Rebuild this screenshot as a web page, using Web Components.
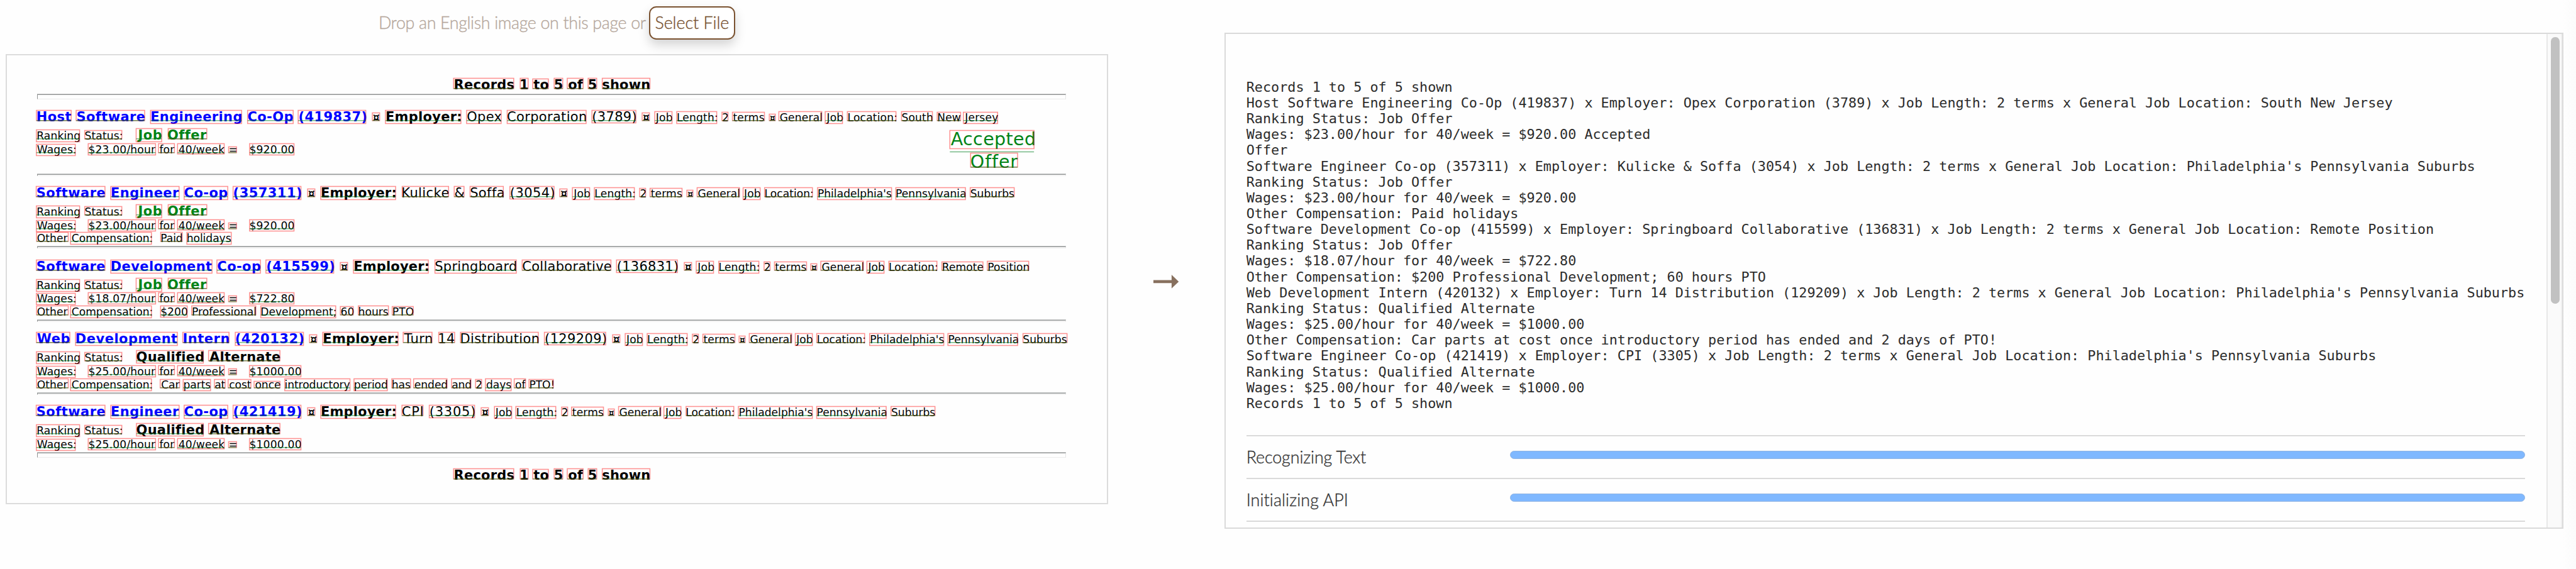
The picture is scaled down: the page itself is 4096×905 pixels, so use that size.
<!DOCTYPE html>
<html lang="en">
<head>
<meta charset="utf-8">
<title>OCR demo</title>
<style>
html,body{margin:0;padding:0;width:100%;height:100%;overflow:hidden;background:#fefefe}
</style>
</head>
<body>
<ocr-app></ocr-app>
<script>
const S = 4096 / 4886;
const u = n => (n * S).toFixed(3) + 'px';
const SANS = '"DejaVu Sans", Verdana, sans-serif';
const MONO = '"DejaVu Sans Mono", Menlo, monospace';
const LATO = 'Lato, sans-serif';
const ctx = document.createElement('canvas').getContext('2d');
const measure = (text, font) => { ctx.font = font; return ctx.measureText(text); };

/* One recognised word: its text, a bounding box and a baseline mark. */
class OcrWord extends HTMLElement {
  connectedCallback() {
    if (this.shadowRoot) return;
    const root = this.attachShadow({ mode: 'open' });
    const text = this.textContent, font = this.font, ls = this.spacing || 0;
    const m = measure(text, font);
    const adv = m.width + ls * text.length;
    const left = -m.actualBoundingBoxLeft - 1.2 * S - adv;
    const right = m.actualBoundingBoxRight + ls * (text.length - 1) - 0.5 * S - adv;
    const top = -m.actualBoundingBoxAscent - 1.8 * S;
    const bottom = Math.max(m.actualBoundingBoxDescent, 0) - (m.actualBoundingBoxDescent > 2 ? 0.6 : 1.4) * S;
    const line = (this.baseShift || 0) * S - 1.5 * S;
    root.innerHTML = `<style>
      :host{display:inline-block;white-space:pre}
      svg{width:1px;height:1px;margin-right:-1px;overflow:visible;vertical-align:baseline}
    </style><slot></slot><svg aria-hidden="true"><g transform="translate(0 1)"><rect x="${left}" y="${top}" width="${right - left}" height="${bottom - top}" fill="none" stroke="#ff0000" stroke-opacity=".43" stroke-width="${1.8 * S}"/><line x1="${left}" x2="${right}" y1="${line}" y2="${line}" stroke="#008020" stroke-opacity=".55" stroke-width="${1.6 * S}"/></g></svg>`;
  }
}
customElements.define('ocr-word', OcrWord);

/* A run of words in one style, stretched between two x positions. */
class OcrRun extends HTMLElement {
  connectedCallback() {
    if (this.shadowRoot) return;
    const { text, x0, x1, size, bold, color, prev, baseShift } = this.spec;
    const root = this.attachShadow({ mode: 'open' });
    const px = size * S, font = `${bold ? 700 : 400} ${px}px ${SANS}`;
    const words = text.split(' ');
    const ws = bold ? 0 : 0.034 * px;
    const first = measure(words[0], font), last = measure(words[words.length - 1], font);
    const natural = words.reduce((s, w) => s + measure(w, font).width, 0) + (words.length - 1) * (measure(' ', font).width + ws);
    const bl = -first.actualBoundingBoxLeft, br = last.width - last.actualBoundingBoxRight;
    const single = text.length === 1;
    const target = single ? natural : (x1 - x0 - 0.4) * S + bl + br;
    const ls = single ? 0 : (target - natural) / (text.length - 1);
    const start = single ? ((x0 + x1) / 2 + .3) * S - natural / 2 : (x0 + 0.6) * S - bl;
    this.endX = start + target + ls;
    root.innerHTML = `<style>
      :host{display:block;flex:none;white-space:pre;line-height:0;margin-left:${(start - prev).toFixed(3)}px;width:${(target + ls).toFixed(3)}px;
      font:${bold ? 700 : 400} ${px}px/0 ${SANS};letter-spacing:${ls.toFixed(4)}px;word-spacing:${ws.toFixed(3)}px;color:${color || '#000'}}
    </style>`;
    words.forEach((w, i) => {
      if (i) root.append(' ');
      const el = document.createElement('ocr-word');
      el.textContent = w; el.font = font; el.spacing = ls; el.baseShift = baseShift;
      root.append(el);
    });
  }
}
customElements.define('ocr-run', OcrRun);

/* A text line whose bottom edge is the baseline. */
class OcrLine extends HTMLElement {
  connectedCallback() {
    if (this.shadowRoot) return;
    const { h, runs, origin } = this.spec;
    const root = this.attachShadow({ mode: 'open' });
    root.innerHTML = `<style>:host{display:flex;align-items:baseline;height:${u(h)}}.strut{width:0;height:${u(h)};flex:none}</style><div class="strut"></div>`;
    let prev = origin * S;
    for (const r of runs) {
      const el = document.createElement('ocr-run');
      el.spec = { ...r, prev };
      root.append(el);
      if (el.endX === undefined) el.connectedCallback();
      prev = el.endX;
    }
  }
}
customElements.define('ocr-line', OcrLine);

class OcrRule extends HTMLElement {
  connectedCallback() {
    if (this.shadowRoot) return;
    const tall = this.hasAttribute('tall');
    this.attachShadow({ mode: 'open' }).innerHTML = `<style>
      :host{display:block;box-sizing:border-box;margin-top:var(--gap);height:${u(tall ? 9.3 : 3.6)};width:${u(1952)};
      border-style:solid;border-width:1px;border-color:#8f9292 #e6e6e6 #ececec #8f9292;box-shadow:0 -1px 0 #c4c6c6}
    </style>`;
  }
}
customElements.define('ocr-rule', OcrRule);

const run = (text, x0, x1, size = 25, bold = false, color, baseShift) => ({ text, x0, x1, size, bold, color, baseShift });
const BLUE = '#0000ff', GREEN = '#008316';
const head = (title, tx, e0, e1, company, c0, c1, a, j0, j1, b, place, g0, g1) => [
  run(title, 69.5, tx, 25, true, BLUE), run('¤', e0 - 25, e0 - 12, 20.5, true), run('Employer:', e0, e1, 25, true),
  run(company, c0, c1), run('¤', a, a + 14, 20.5, true), run('Job Length: 2 terms', j0, j1, 20.4),
  run('¤', b, b + 12, 16.5, true), run('General Job Location: ' + place, g0, g1, 20.4)];
const status = (t, x, c) => [run('Ranking Status:', 70, 231, 20.4), run(t, 259, x, 25, true, c)];
const wages = (w, t, x) => [run('Wages:', 69.5, 143, 20.4), run(w + '/hour for 40/week =', 168.2, 449, 20.4), run(t, 473.5, x, 20.4)];
const other = (t, x) => [run('Other Compensation:', 69.5, 288, 20.4), run(t, 305, x, 20.4)];
const records = () => [run('Records 1 to 5 of 5 shown', 861.3, 1232.4, 25, true)];
const PHL = "Philadelphia's Pennsylvania Suburbs";

const ITEMS = [
  { y: 169.6, runs: records() },
  { rule: 179.2, tall: true },
  { y: 229.6, runs: head('Host Software Engineering Co-Op (419837)', 694.5, 731.7, 874.6, 'Opex Corporation (3789)', 886, 1206.4, 1218.4, 1242.2, 1450, 1459, 'South New Jersey', 1478.2, 1893) },
  { split: true, y: 290.6, left: [{ y: 264.6, runs: status('Job Offer', 390.7, GREEN) }, { y: 290.6, runs: wages('$23.00', '$920.00', 557.5) }],
    right: [{ y: 275, runs: [run('Accepted', 1802.7, 1962, 34, false, GREEN, 14)] }, { y: 318, runs: [run('Offer', 1841, 1929.8, 34, false, GREEN)] }] },
  { rule: 330 },
  { y: 374.6, runs: head('Software Engineer Co-op (357311)', 571, 609, 750.6, 'Kulicke & Soffa (3054)', 763.2, 1050.9, 1062.4, 1086.5, 1294, 1303, PHL, 1323, 1924) },
  { y: 409.2, runs: status('Job Offer', 390.7, GREEN) },
  { y: 435, runs: wages('$23.00', '$920.00', 557.5) },
  { y: 459.8, runs: other('Paid holidays', 438.4) },
  { rule: 468.2 },
  { y: 513.8, runs: head('Software Development Co-op (415599)', 633.5, 671.3, 813, 'Springboard Collaborative (136831)', 825.2, 1285.7, 1298, 1321.5, 1529.8, 1537.8, 'Remote Position', 1558, 1952) },
  { y: 548.2, runs: status('Job Offer', 390.7, GREEN) },
  { y: 574.2, runs: wages('$18.07', '$722.80', 557.5) },
  { y: 599.2, runs: other('$200 Professional Development; 60 hours PTO', 784.3) },
  { rule: 606.8 },
  { y: 652, runs: head('Web Development Intern (420132)', 575.3, 613, 755.5, 'Turn 14 Distribution (129209)', 764.8, 1149.6, 1162, 1186.3, 1394, 1402, PHL, 1422, 2023.8) },
  { y: 686.6, runs: status('Qualified Alternate', 530.8) },
  { y: 712.5, runs: wages('$25.00', '$1000.00', 570.8) },
  { y: 737.4, runs: other('Car parts at cost once introductory period has ended and 2 days of PTO!', 1050) },
  { rule: 745.6 },
  { y: 790.4, runs: head('Software Engineer Co-op (421419)', 571, 609, 750.6, 'CPI (3305)', 762.6, 900.7, 913, 938, 1145, 1153.4, PHL, 1173.8, 1774) },
  { y: 825, runs: status('Qualified Alternate', 530.8) },
  { y: 851, runs: wages('$25.00', '$1000.00', 570.8) },
  { rule: 859, tall: true },
  { y: 910, runs: records() }
];

const ORIGIN = 70.5;
function fill(parent, items, y, origin) {
  for (const it of items) {
    if (it.rule) {
      const el = document.createElement('ocr-rule');
      if (it.tall) el.setAttribute('tall', '');
      el.style.setProperty('--gap', u(it.rule - y));
      parent.append(el);
      y = it.rule + (it.tall ? 9.3 : 3.6);
    } else if (it.split) {
      const box = document.createElement('div');
      box.className = 'split';
      box.style.height = u(it.y - y);
      const l = document.createElement('div'), r = document.createElement('div');
      l.style.width = u(1700 - origin);
      box.append(l, r);
      parent.append(box);
      fill(l, it.left, y, origin);
      fill(r, it.right, y, 1700);
      y = it.y;
    } else {
      const el = document.createElement('ocr-line');
      el.spec = { h: it.y - y, runs: it.runs, origin };
      parent.append(el);
      y = it.y;
    }
  }
}

/* Annotated source image. */
class OcrImage extends HTMLElement {
  connectedCallback() {
    if (this.shadowRoot) return;
    const root = this.attachShadow({ mode: 'open' });
    root.innerHTML = `<style>
      :host{display:block;box-sizing:border-box;width:${u(2091.5)};height:${u(855)};border:2px solid #dcdcdc;background:#fefefe;overflow:hidden}
      .sheet{padding-left:calc(${u(ORIGIN - 10.5)} - 2px);margin-top:-2px}
      .split{display:flex}.split>div{flex:none}
    </style><div class="sheet"></div>`;
    fill(root.querySelector('.sheet'), ITEMS, 102, ORIGIN);
  }
}
customElements.define('ocr-image', OcrImage);

/* Light Lato label fitted to a width. */
class FitLabel extends HTMLElement {
  connectedCallback() {
    if (this.shadowRoot) return;
    const t = this.textContent, px = 32 * S, w = +this.getAttribute('w') * S;
    const ls = (w - measure(t, `300 ${px}px ${LATO}`).width) / t.length;
    this.attachShadow({ mode: 'open' }).innerHTML = `<style>:host{display:block;flex:none;white-space:pre;font:300 ${px}px/${u(40)} ${LATO};letter-spacing:${ls.toFixed(4)}px;width:${w}px;-webkit-text-stroke:.35px currentColor}</style><slot></slot>`;
  }
}
customElements.define('fit-label', FitLabel);

class DropBar extends HTMLElement {
  connectedCallback() {
    this.attachShadow({ mode: 'open' }).innerHTML = `<style>
      :host{display:flex;align-items:center;height:${u(63)};padding-top:${u(11.7)};padding-left:${u(707.5)};color:#b5a79c}
      .button{box-sizing:border-box;display:flex;align-items:center;margin-left:${u(6)};width:${u(163)};height:${u(63)};padding-left:${u(9)};
        border:2px solid #7a5230;border-radius:${u(14)};background:#fff;color:#76502f;box-shadow:0 ${u(10)} ${u(20)} rgba(0,0,0,.17)}
      fit-label{margin-top:2px}
    </style><fit-label w="507">Drop an English image on this page or</fit-label><div class="button" role="button"><fit-label w="140.5">Select File</fit-label></div>`;
  }
}
customElements.define('drop-bar', DropBar);

class FlowArrow extends HTMLElement {
  connectedCallback() {
    this.attachShadow({ mode: 'open' }).innerHTML = `<style>:host{display:block;flex:none}svg{display:block;width:${u(48)};height:${u(26)}}</style>
    <svg viewBox="0 0 48 26"><path fill="#87705e" d="M0 10.1H34.5V0L48 13 34.5 26V15.9H0z"/></svg>`;
  }
}
customElements.define('flow-arrow', FlowArrow);

class ProgressRow extends HTMLElement {
  connectedCallback() {
    const t = this.getAttribute('label');
    this.attachShadow({ mode: 'open' }).innerHTML = `<style>
      :host{display:flex;box-sizing:border-box;height:${u(81)};border-top:2px solid #dadada;color:#333}
      fit-label{margin-top:calc(${u(22)} - 2px);margin-right:auto}
      .bar{box-sizing:border-box;flex:none;width:${u(1926)};height:${u(15.8)};margin-top:calc(${u(29.5)} - 2px);border:1px solid #90b4e2;border-radius:${u(8)};background:#7fb8ff}
    </style><fit-label w="${this.getAttribute('w')}">${t}</fit-label><div class="bar"></div>`;
  }
}
customElements.define('progress-row', ProgressRow);

const OUT = `Records 1 to 5 of 5 shown
Host Software Engineering Co-Op (419837) x Employer: Opex Corporation (3789) x Job Length: 2 terms x General Job Location: South New Jersey
Ranking Status: Job Offer
Wages: $23.00/hour for 40/week = $920.00 Accepted
Offer
Software Engineer Co-op (357311) x Employer: Kulicke & Soffa (3054) x Job Length: 2 terms x General Job Location: Philadelphia's Pennsylvania Suburbs
Ranking Status: Job Offer
Wages: $23.00/hour for 40/week = $920.00
Other Compensation: Paid holidays
Software Development Co-op (415599) x Employer: Springboard Collaborative (136831) x Job Length: 2 terms x General Job Location: Remote Position
Ranking Status: Job Offer
Wages: $18.07/hour for 40/week = $722.80
Other Compensation: $200 Professional Development; 60 hours PTO
Web Development Intern (420132) x Employer: Turn 14 Distribution (129209) x Job Length: 2 terms x General Job Location: Philadelphia's Pennsylvania Suburbs
Ranking Status: Qualified Alternate
Wages: $25.00/hour for 40/week = $1000.00
Other Compensation: Car parts at cost once introductory period has ended and 2 days of PTO!
Software Engineer Co-op (421419) x Employer: CPI (3305) x Job Length: 2 terms x General Job Location: Philadelphia's Pennsylvania Suburbs
Ranking Status: Qualified Alternate
Wages: $25.00/hour for 40/week = $1000.00
Records 1 to 5 of 5 shown`;

class OutputPanel extends HTMLElement {
  connectedCallback() {
    const root = this.attachShadow({ mode: 'open' });
    root.innerHTML = `<style>
      :host{display:flex;box-sizing:border-box;width:${u(2540)};height:${u(941.5)};border:2px solid #dadada;background:#fefefe;overflow:hidden}
      .body{flex:none;width:${u(2426)};padding-left:calc(${u(42)} - 2px);padding-top:calc(${u(87.8)} - 2px);box-sizing:content-box}
      pre{margin:0;height:${u(676)};font:${u(26)}/${u(30)} ${MONO};color:#2c2c2c}
      .end{height:2px;background:#dadada}
      .track{box-sizing:border-box;margin-left:auto;width:${u(30)};background:#fafafa;border-left:2px solid #e8e8e8;border-right:2px solid #efefef;padding:${u(6)} 0 0 ${u(6.5)}}
      .thumb{width:${u(16)};height:${u(505)};border-radius:${u(8)};background:#c1c1c1}
    </style><div class="body"><pre></pre>
      <progress-row label="Recognizing Text" w="228"></progress-row>
      <progress-row label="Initializing API" w="195"></progress-row><div class="end"></div></div>
    <div class="track"><div class="thumb"></div></div>`;
    root.querySelector('pre').textContent = OUT;
  }
}
customElements.define('output-panel', OutputPanel);

class OcrApp extends HTMLElement {
  connectedCallback() {
    this.attachShadow({ mode: 'open' }).innerHTML = `<style>
      :host{display:flex;width:4096px;height:905px;background:linear-gradient(90deg,#fefefe 99.5%,#fbfbfb)}
      .source{flex:none;padding-left:${u(10.5)};width:${u(2091.5)}}
      ocr-image{margin-top:${u(27.4)}}
      flow-arrow{margin-left:${u(86.2)};margin-top:${u(521)}}
      output-panel{margin-left:${u(85.8)};margin-top:${u(62.2)};flex:none}
    </style><div class="source"><drop-bar></drop-bar><ocr-image></ocr-image></div><flow-arrow></flow-arrow><output-panel></output-panel>`;
  }
}
customElements.define('ocr-app', OcrApp);
</script>
</body>
</html>
